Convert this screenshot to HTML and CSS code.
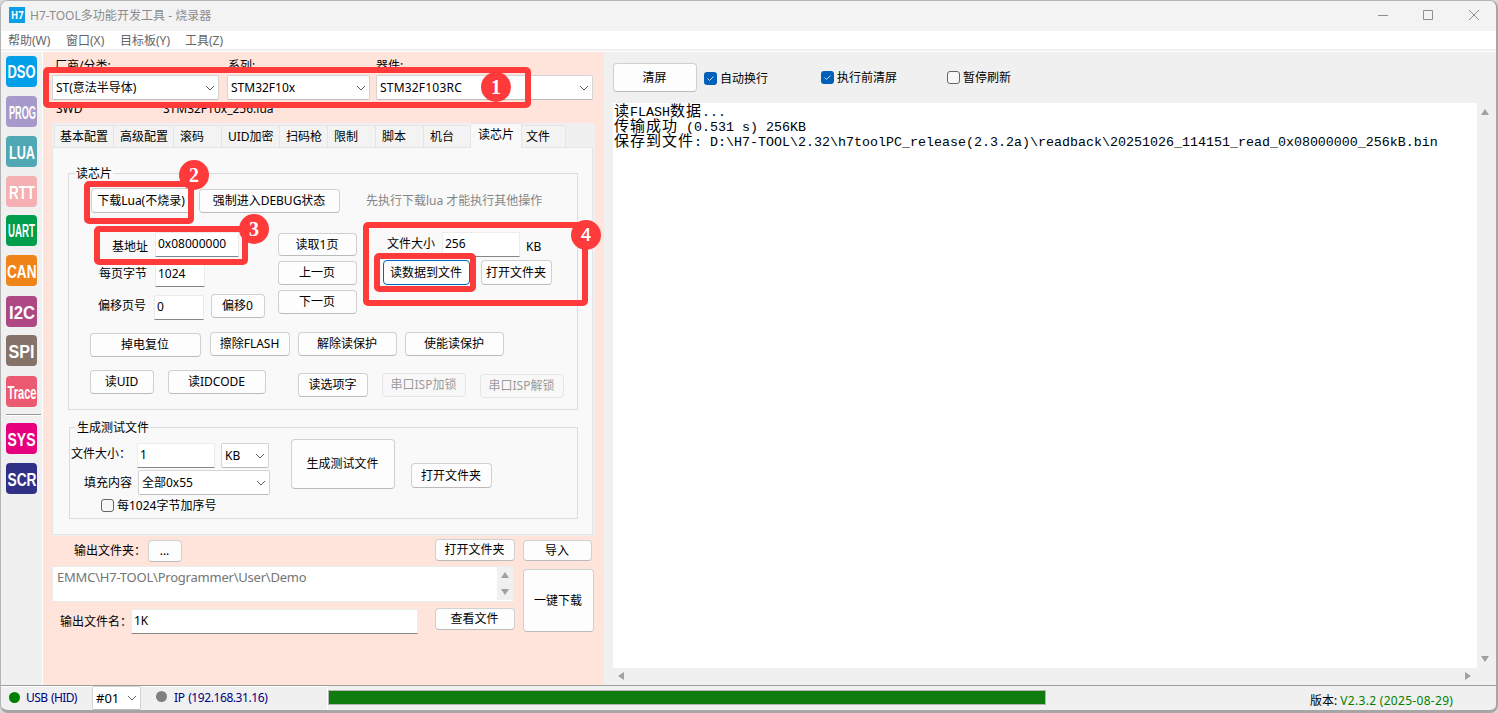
FILE: index.html
```html
<!DOCTYPE html>
<html lang="zh-CN">
<head>
<meta charset="utf-8">
<title>H7-TOOL多功能开发工具 - 烧录器</title>
<link rel="stylesheet" href="styles.css">
</head>
<body>
<div class="window">
  <header class="titlebar">
    <svg class="logo" viewBox="0 0 16 16"><rect width="16" height="16" fill="#0a9fe6"/><text x="2" y="11.8" textLength="12.5" lengthAdjust="spacingAndGlyphs">H7</text></svg>
    <span class="title">H7-TOOL多功能开发工具 - 烧录器</span>
    <svg class="controls" viewBox="0 0 102 12"><path d="M0 6.5h10M45.500 1.500h9v9h-9zM91 1l10 10M101 1l-10 10"/></svg>
  </header>
  <nav class="menu"><span class="m1">帮助(W)</span><span class="m2">窗口(X)</span><span class="m3">目标板(Y)</span><span class="m4">工具(Z)</span></nav>

  <div class="main">
    <aside class="sidebar">
      <svg class="tool dso" viewBox="0 0 31 31"><text x="1.500" y="22" textLength="28" lengthAdjust="spacingAndGlyphs">DSO</text></svg>
      <svg class="tool prog" viewBox="0 0 31 31"><text x="3" y="23" textLength="27" lengthAdjust="spacingAndGlyphs">PROG</text></svg>
      <svg class="tool lua" viewBox="0 0 31 31"><text x="3" y="23" textLength="26" lengthAdjust="spacingAndGlyphs">LUA</text></svg>
      <svg class="tool rtt" viewBox="0 0 31 31"><text x="3" y="23" textLength="26" lengthAdjust="spacingAndGlyphs">RTT</text></svg>
      <svg class="tool uart" viewBox="0 0 31 31"><text x="2" y="22" textLength="27" lengthAdjust="spacingAndGlyphs">UART</text></svg>
      <svg class="tool can" viewBox="0 0 31 31"><text x="1" y="22.500" textLength="29.5" lengthAdjust="spacingAndGlyphs">CAN</text></svg>
      <svg class="tool i2c" viewBox="0 0 31 31"><text x="3" y="22.500" textLength="26" lengthAdjust="spacingAndGlyphs">I2C</text></svg>
      <svg class="tool spi" viewBox="0 0 31 31"><text x="2.500" y="23" textLength="26" lengthAdjust="spacingAndGlyphs">SPI</text></svg>
      <svg class="tool trace" viewBox="0 0 31 31"><text x="1.500" y="22.500" textLength="29" lengthAdjust="spacingAndGlyphs">Trace</text></svg>
      <hr>
      <svg class="tool sys" viewBox="0 0 31 31"><text x="1.500" y="22.500" textLength="28" lengthAdjust="spacingAndGlyphs">SYS</text></svg>
      <svg class="tool scr" viewBox="0 0 31 31"><text x="1.500" y="23" textLength="29" lengthAdjust="spacingAndGlyphs">SCR</text></svg>
    </aside>

    <section class="programmer">
      <div class="chip-labels"><span class="cl1">厂商/分类:</span><span class="cl2">系列:</span><span class="cl3">器件:</span></div>
      <div class="chip-row">
        <div class="combo vendor"><span>ST(意法半导体)</span><svg viewBox="0 0 10 6"><path d="M1 1l4 4 4-4"/></svg></div>
        <div class="combo series"><span>STM32F10x</span><svg viewBox="0 0 10 6"><path d="M1 1l4 4 4-4"/></svg></div>
        <div class="combo device"><span>STM32F103RC</span><svg viewBox="0 0 10 6"><path d="M1 1l4 4 4-4"/></svg></div>
      </div>
      <div class="chip-info"><span class="swd">SWD</span><span class="luafile">STM32F10x_256.lua</span></div>

      <div class="tabs">
        <div class="tabstrip">
          <span class="tab t1">基本配置</span><span class="tab t2">高级配置</span><span class="tab t3">滚码</span><span class="tab t4">UID加密</span><span class="tab t5">扫码枪</span><span class="tab t6">限制</span><span class="tab t7">脚本</span><span class="tab t8">机台</span><span class="tab t9 active">读芯片</span><span class="tab t10">文件</span>
        </div>
        <div class="page">
          <div class="group readchip">
            <span class="legend">读芯片</span>
            <div class="row ra">
              <button class="btn a1">下载Lua(不烧录)</button><button class="btn a2">强制进入DEBUG状态</button><span class="hint">先执行下载lua 才能执行其他操作</span>
            </div>
            <div class="row rb">
              <label class="b1">基地址</label><div class="input b2">0x08000000</div><button class="btn b3">读取1页</button><label class="b4">文件大小</label><div class="input b5">256</div><label class="b6">KB</label>
            </div>
            <div class="row rc">
              <label class="c1">每页字节</label><div class="input c2">1024</div><button class="btn c3">上一页</button><button class="btn c4 focus">读数据到文件</button><button class="btn c5">打开文件夹</button>
            </div>
            <div class="row rd">
              <label class="d1">偏移页号</label><div class="input d2">0</div><button class="btn d3">偏移0</button><button class="btn d4">下一页</button>
            </div>
            <div class="row re">
              <button class="btn e1">掉电复位</button><button class="btn e2">擦除FLASH</button><button class="btn e3">解除读保护</button><button class="btn e4">使能读保护</button>
            </div>
            <div class="row rf">
              <button class="btn f1">读UID</button><button class="btn f2">读IDCODE</button><button class="btn f3">读选项字</button><button class="btn f4" disabled>串口ISP加锁</button><button class="btn f5" disabled>串口ISP解锁</button>
            </div>
          </div>
          <div class="group testfile">
            <span class="legend">生成测试文件</span>
            <div class="row">
              <div class="fields">
                <div class="row g1"><label class="h1">文件大小：</label><div class="input h2">1</div><div class="combo h3"><span>KB</span><svg viewBox="0 0 10 6"><path d="M1 1l4 4 4-4"/></svg></div></div>
                <div class="row g2"><label class="i1">填充内容</label><div class="combo i2"><span>全部0x55</span><svg viewBox="0 0 10 6"><path d="M1 1l4 4 4-4"/></svg></div></div>
                <div class="row g3"><span class="check"></span><label class="j1">每1024字节加序号</label></div>
              </div>
              <button class="btn k1">生成测试文件</button><button class="btn k2">打开文件夹</button>
            </div>
          </div>
        </div>
      </div>

      <div class="output">
        <div class="out-left">
          <div class="row o1"><label class="p1">输出文件夹：</label><button class="btn p2">...</button><button class="btn p3">打开文件夹</button></div>
          <div class="path"><span>EMMC\H7-TOOL\Programmer\User\Demo</span>
            <div class="mini-scroll"><i class="up"></i><i class="down"></i></div></div>
          <div class="row o3"><label class="q1">输出文件名：</label><div class="input q2">1K</div><button class="btn q3">查看文件</button></div>
        </div>
        <div class="out-right"><button class="btn r1">导入</button><button class="btn r2">一键下载</button></div>
      </div>

      <div class="mark box1"></div><div class="mark box2"></div><div class="mark box3"></div><div class="mark box4"></div><div class="mark box5"></div>
      <div class="num n1">1</div><div class="num n2">2</div><div class="num n3">3</div><div class="num n4">4</div>
    </section>

    <section class="log">
      <div class="log-tools">
        <button class="btn clear">清屏</button>
        <span class="check on s1"><svg viewBox="0 0 13 13"><path d="M3.500 6.500l2 2 4-4"/></svg></span><label class="s2">自动换行</label>
        <span class="check on s3"><svg viewBox="0 0 13 13"><path d="M3.500 6.500l2 2 4-4"/></svg></span><label class="s4">执行前清屏</label>
        <span class="check s5"></span><label class="s6">暂停刷新</label>
      </div>
      <div class="console-wrap">
        <div class="console">
          <div class="line"><b>读</b>FLASH<b>数据</b>...</div>
          <div class="line"><b>传输成功</b> (0.531 s) 256KB</div>
          <div class="line"><b>保存到文件</b>: D:\H7-TOOL\2.32\h7toolPC_release(2.3.2a)\readback\20251026_114151_read_0x08000000_256kB.bin</div>
        </div>
        <div class="vscroll"><i class="up"></i><i class="down"></i></div>
        <div class="hscroll"><i class="left"></i><i class="right"></i></div>
      </div>
    </section>
  </div>

  <footer class="status">
    <div class="conn">
      <i class="dot green"></i><span class="usb">USB (HID)</span>
      <div class="combo port"><span>#01</span><svg viewBox="0 0 10 6"><path d="M1 1l4 4 4-4"/></svg></div>
      <i class="dot gray"></i><span class="ip">IP (192.168.31.16)</span>
    </div>
    <div class="progress"></div>
    <span class="version">版本: <em>V2.3.2 (2025-08-29)</em></span>
  </footer>
</div>
</body>
</html>
```
FILE: styles.css
```css
* { box-sizing: border-box; }
body {
  margin: 0; width: 1498px; height: 713px; overflow: hidden; background: #d8d8d8;
  font: 12px/16px "Noto Sans", "Noto Sans CJK SC", sans-serif; color: #000; white-space: nowrap;
}
.window {
  width: 1498px; height: 713px; border: 1px solid #b4b4b4; border-right: 2px solid #a6a6a6;
  border-bottom: 3px solid #a6a6a6; border-radius: 8px; background: #f0f0f0; overflow: hidden;
  display: flex; flex-direction: column;
}
.row { display: flex; align-items: flex-start; }

/* Title bar and menu */
.titlebar { height: 30px; flex: none; background: #f3f3f3; display: flex; align-items: flex-start; }
.logo { width: 16px; height: 16px; margin: 6px 0 0 8px; }
.logo text { font: bold 10px "Open Sans", sans-serif; fill: #fff; }
.title { margin: 7px 0 0 5px; color: #8c8c8c; font-size: 12px; letter-spacing: 0.030px; }
.controls { width: 102px; height: 12px; margin: 8px 16px 0 auto; fill: none; stroke: #8f8f8f; stroke-width: 1; }
.menu { height: 19px; flex: none; background: #fff; border-bottom: 1px solid #f0f0f0; display: flex; color: #666; line-height: 19px; }
.m1 { width: 58px; margin-left: 7px; }
.m2 { width: 54px; }
.m3 { width: 65px; }

.main { height: 636px; flex: none; border-top: 1px solid #f0f0f0; border-bottom: 1px solid #9d9d9d; display: flex; box-shadow: inset 0 1px #fff; }
.sidebar { width: 42px; border-right: 1px solid #fff; padding: 5px 0 0 5px; }
.tool { display: block; width: 31px; height: 31px; border-radius: 4px; margin-bottom: 9px; overflow: visible; }
.tool text { font: bold 18px "Liberation Sans", sans-serif; fill: #fff; }
.dso { background: #009fe8; }
.prog { background: #a79acb; }
.lua { background: #50a8b5; }
.rtt { background: #f4b0b3; margin-bottom: 8px; }
.uart { background: #009d4d; }
.can { background: #f18419; margin-bottom: 10px; }
.i2c { background: #ad4884; margin-bottom: 8px; }
.spi { background: #857269; margin-bottom: 10px; }
.trace { background: #eb5a70; margin-bottom: 0; }
.sys { background: #e6007e; margin-bottom: 9px; }
.scr { background: #303087; }
hr { width: 35px; height: 2px; margin: 7px 0 7px; border: 0; border-top: 1px solid #999; border-bottom: 1px solid #fff; }

/* Common controls */
.btn {
  display: block; flex: none; padding: 0 1px 0 0; margin: 0; font: inherit; color: #000; text-align: center;
  background: #fdfdfd; border: 1px solid #d0d0d0; border-bottom-color: #bbb; border-radius: 4px; white-space: nowrap; height: 24px;
}
.btn:disabled { color: #9b9b9b; background: #f8f8f8; border-color: #e5e5e5; }
.btn.focus { border: 1px solid #0067c0; }
.input { flex: none; height: 25px; background: #fff; border: 1px solid #ececec; border-bottom: 1px solid #868686; border-radius: 1px; padding-left: 2px; line-height: 22px; }
.combo { flex: none; display: flex; justify-content: space-between; align-items: center; height: 25px; background: #fff; border: 1px solid #d4d4d4; border-bottom-color: #bcbcbc; border-radius: 2px; padding: 0 3px; }
.combo svg { width: 10px; height: 6px; fill: none; stroke: #606060; }
.check { flex: none; width: 13px; height: 13px; border: 1px solid #666; border-radius: 3px; background: #f7f7f7; }
.check.on { background: #005fb8; border: 0; }
.check svg { display: block; width: 13px; height: 13px; fill: none; stroke: #c6ddf2; }
label { flex: none; }

/* Programmer panel */
.programmer { position: relative; width: 561px; height: 633px; margin-top: 1px; background: #ffe4db; flex: none; }
.chip-labels { height: 23px; padding: 6px 0 0 12px; display: flex; }
.cl1 { width: 173px; }
.cl2 { width: 148px; }
.chip-row { display: flex; height: 25px; padding-left: 9px; }
.vendor { width: 167px; margin-right: 8px; }
.series { width: 143px; margin-right: 6px; }
.device { width: 217px; letter-spacing: 0.200px; }
.chip-info { height: 23px; padding: 1px 0 0 13px; display: flex; }
.swd { width: 107px; }

.tabs { margin-left: 9px; width: 543px; height: 413px; background: #f0f0f0; }
.tabstrip { height: 24px; display: flex; align-items: flex-end; padding-left: 2px; }
.tab { height: 22px; line-height: 21px; background: #f3f3f3; border: 1px solid #e5e5e5; border-left: 0; border-bottom: 0; flex: none; padding-left: 6px; }
.t1 { width: 60px; padding-left: 5px; border-left: 1px solid #e5e5e5; }
.t2 { width: 60px; }
.t3 { width: 48px; }
.t4 { width: 58px; }
.t5, .t6, .t7 { width: 48px; }
.t8 { width: 47px; }
.t9 { width: 51px; padding-left: 7px; }
.t10 { width: 44px; padding-left: 4px; }
.tab.active { height: 25px; background: #f9f9f9; margin-bottom: -1px; }
.page { width: 541px; height: 388px; background: #f9f9f9; border: 1px solid #e5e5e5; padding: 25px 0 0 15px; }
.group { border: 1px solid #dcdcdc; position: relative; }
.readchip { width: 510px; height: 237px; }
.testfile { width: 509px; height: 92px; margin: 17px 0 0 1px; padding-top: 10px; }
.legend { position: absolute; left: 6px; top: -8px; background: #f9f9f9; padding: 0 1px; }

.ra { height: 58px; padding-top: 15px; }
.a1 { width: 101px; height: 25px; margin: -1px 0 0 22px; }
.a2 { width: 141px; margin-left: 7px; }
.hint { margin: 4px 0 0 26px; color: #858585; }
.rb { height: 28px; }
.b1 { width: 43px; margin: 7px 0 0 43px; }
.b2 { width: 84px; }
.b3 { width: 79px; height: 23px; margin: 1px 0 0 39px; }
.b4 { width: 55px; margin: 4px 0 0 30px; }
.b5 { width: 78px; }
.b6 { margin: 7px 0 0 6px; }
.rc { height: 30px; }
.c1 { width: 56px; margin: 6px 0 0 30px; }
.c2 { width: 50px; margin-top: 2px; }
.c3 { width: 79px; margin: 1px 0 0 73px; }
.c4 { width: 87px; height: 25px; margin-left: 26px; }
.c5 { width: 71px; height: 25px; margin-left: 11px; }
.rd { height: 42px; }
.d1 { width: 56px; margin: 8px 0 0 29px; }
.d2 { width: 50px; margin-top: 5px; }
.d3 { width: 54px; margin: 4px 0 0 7px; }
.d4 { width: 79px; margin-left: 13px; }
.re { height: 38px; }
.e1 { width: 111px; margin: 1px 0 0 21px; }
.e2 { width: 80px; margin-left: 9px; }
.e3 { width: 99px; margin-left: 8px; }
.e4 { width: 99px; margin-left: 8px; }
.f1 { width: 64px; margin-left: 21px; }
.f2 { width: 98px; margin-left: 14px; }
.f3 { width: 70px; margin: 3px 0 0 32px; }
.f4 { width: 84px; margin: 3px 0 0 14px; }
.f5 { width: 84px; margin: 4px 0 0 14px; }

.fields { width: 221px; padding-top: 5px; }
.g1 { height: 27px; }
.h1 { width: 66px; margin: 3px 0 0 1px; }
.h2 { width: 78px; }
.h3 { width: 48px; margin-left: 6px; }
.g2 { height: 29px; }
.i1 { width: 54px; margin: 5px 0 0 14px; }
.i2 { width: 132px; }
.g3 { padding-left: 31px; }
.g3 label { margin: -1px 0 0 3px; }
.k1 { width: 104px; height: 50px; margin-top: 1px; }
.k2 { width: 81px; height: 25px; margin: 25px 0 0 16px; }

.output { display: flex; padding-left: 9px; }
.out-left { width: 463px; padding-top: 3px; }
.o1 { height: 27px; }
.p1 { width: 74px; margin: 4px 0 0 22px; }
.p2 { width: 34px; height: 22px; margin-top: 1px; }
.p3 { width: 80px; height: 22px; margin-left: 253px; }
.path { display: flex; width: 462px; height: 36px; padding-left: 4px; border: 1px solid #ebebeb; background: #fff; color: #757575; font-size: 13px; line-height: 20px; letter-spacing: -0.220px; justify-content: space-between; }
.mini-scroll { width: 16px; height: 33px; background: #f0f0f0; display: flex; flex-direction: column; justify-content: space-between; align-items: center; padding: 5px 0; }
.o3 { padding-top: 6px; }
.q1 { width: 71px; margin: 6px 0 0 8px; }
.q2 { width: 287px; margin-top: 1px; }
.q3 { width: 80px; height: 22px; margin-left: 17px; }
.out-right { padding: 4px 0 0 8px; }
.r1 { width: 69px; height: 21px; line-height: 19px; }
.r2 { width: 71px; height: 63px; margin-top: 8px; }

i { display: block; flex: none; }
i.up { width: 0; height: 0; border: 4px solid transparent; border-top: 0; border-bottom: 6px solid #a0a0a0; }
i.down { width: 0; height: 0; border: 4px solid transparent; border-bottom: 0; border-top: 6px solid #a0a0a0; }
i.left { width: 0; height: 0; border: 4px solid transparent; border-left: 0; border-right: 6px solid #a0a0a0; }
i.right { width: 0; height: 0; border: 4px solid transparent; border-right: 0; border-left: 6px solid #a0a0a0; }

/* Numbered callouts lying over the form */
.mark { position: absolute; border: 6px solid #ff3a3a; border-radius: 5px; }
.box1 { left: 0; top: 15px; width: 488px; height: 41px; }
.box2 { left: 41px; top: 129px; width: 110px; height: 43px; }
.box3 { left: 51px; top: 174px; width: 154px; height: 39px; }
.box4 { left: 320px; top: 170px; width: 225px; height: 84px; }
.box5 { left: 331px; top: 201px; width: 102px; height: 39px; }
.num { position: absolute; width: 30px; height: 30px; border-radius: 50%; background: #ff3a3a; color: #fff; font: bold 20px/30px "Liberation Serif", serif; text-align: center; }
.n1 { left: 438px; top: 20px; }
.n2 { left: 136px; top: 108px; }
.n3 { left: 196px; top: 162px; }
.n4 { left: 528px; top: 168px; font: 600 18px/29px "Open Sans", sans-serif; }

/* Log panel */
.log { flex: 1; padding: 12px 0 0 9px; }
.log-tools { display: flex; height: 40px; }
.clear { width: 84px; height: 29px; }
.s1 { margin: 9px 0 0 7px; }
.s2 { width: 101px; margin: 8px 0 0 3px; }
.s3 { margin: 8px 0 0 0; }
.s4 { width: 110px; margin: 7px 0 0 3px; }
.s5 { margin: 8px 0 0 0; }
.s6 { margin: 7px 0 0 3px; }
.console-wrap { display: grid; grid-template-columns: 864px 16px; grid-template-rows: 565px 16px; }
.console { background: #fff; padding-left: 1px; font: 13.330px/15px "Liberation Mono", monospace; }
.line { height: 15px; white-space: pre; }
.line b { font: 15px/13px "Noto Sans CJK SC", sans-serif; letter-spacing: 1px; }
.vscroll { display: flex; flex-direction: column; justify-content: space-between; align-items: center; padding: 6px 0; }
.hscroll { display: flex; justify-content: space-between; align-items: center; padding: 0 6px 0 5px; }

/* Status bar */
.status { flex: 1; display: flex; align-items: flex-start; color: #000080; }
.conn { display: flex; width: 327px; height: 24px; border-top: 1px solid #fff; border-right: 1px solid #fff; }
.dot { width: 11px; height: 11px; border-radius: 50%; }
.green { background: #008000; margin: 5px 0 0 8px; }
.gray { background: #808080; margin: 4px 0 0 15px; }
.usb { width: 66px; margin: 3px 0 0 6px; letter-spacing: -0.600px; word-spacing: 1px; }
.port { width: 49px; height: 24px; margin-top: -1px; color: #000; font-size: 13px; }
.ip { margin: 3px 0 0 7px; letter-spacing: -0.420px; word-spacing: 1px; }
.progress { width: 718px; height: 15px; margin-top: 4px; background: #107c10; border: 1px solid #b5b5b5; }
.version { margin: 7px 0 0 264px; color: #000; }
.version em { font-style: normal; color: #008000; letter-spacing: 0.300px; }
```
